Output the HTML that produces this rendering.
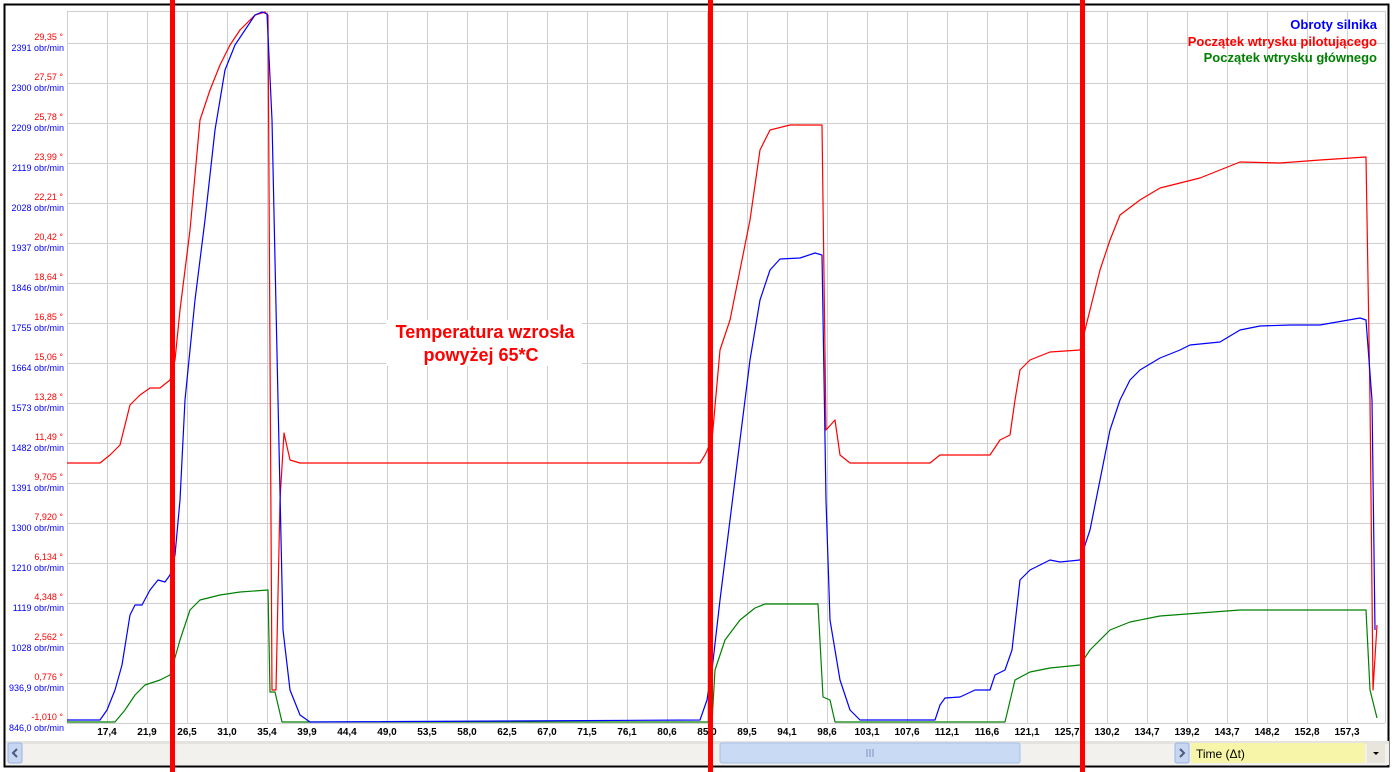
<!DOCTYPE html>
<html><head><meta charset="utf-8"><style>
html,body{margin:0;padding:0;background:#fff;width:1395px;height:772px;overflow:hidden}
svg{display:block}
.yr{fill:#f00;font:9px "Liberation Sans",sans-serif;text-anchor:end}
.yb{fill:#00f;font:9px "Liberation Sans",sans-serif;text-anchor:end}
.xl{fill:#000;font:bold 10px "Liberation Sans",sans-serif;text-anchor:middle}
</style></head><body>
<svg width="1395" height="772" viewBox="0 0 1395 772" xmlns="http://www.w3.org/2000/svg">
<defs>
<pattern id="g" patternUnits="userSpaceOnUse" x="67" y="43" width="40" height="40">
<path d="M0.5 0V40M0 0.5H40" stroke="#cfcfcf" stroke-width="1" fill="none"/>
</pattern>
</defs>
<rect x="4.5" y="4.5" width="1384" height="762" fill="#fff" stroke="#000" stroke-width="2"/>
<rect x="67" y="11" width="1318" height="712" fill="url(#g)"/>
<path d="M67 11.5H1385M1385.5 11V723M67 723.5H1385" stroke="#cfcfcf" fill="none"/>
<g>
<text class="yr" x="63" y="40">29,35 °</text><text class="yb" x="64" y="51">2391 obr/min</text>
<text class="yr" x="63" y="80">27,57 °</text><text class="yb" x="64" y="91">2300 obr/min</text>
<text class="yr" x="63" y="120">25,78 °</text><text class="yb" x="64" y="131">2209 obr/min</text>
<text class="yr" x="63" y="160">23,99 °</text><text class="yb" x="64" y="171">2119 obr/min</text>
<text class="yr" x="63" y="200">22,21 °</text><text class="yb" x="64" y="211">2028 obr/min</text>
<text class="yr" x="63" y="240">20,42 °</text><text class="yb" x="64" y="251">1937 obr/min</text>
<text class="yr" x="63" y="280">18,64 °</text><text class="yb" x="64" y="291">1846 obr/min</text>
<text class="yr" x="63" y="320">16,85 °</text><text class="yb" x="64" y="331">1755 obr/min</text>
<text class="yr" x="63" y="360">15,06 °</text><text class="yb" x="64" y="371">1664 obr/min</text>
<text class="yr" x="63" y="400">13,28 °</text><text class="yb" x="64" y="411">1573 obr/min</text>
<text class="yr" x="63" y="440">11,49 °</text><text class="yb" x="64" y="451">1482 obr/min</text>
<text class="yr" x="63" y="480">9,705 °</text><text class="yb" x="64" y="491">1391 obr/min</text>
<text class="yr" x="63" y="520">7,920 °</text><text class="yb" x="64" y="531">1300 obr/min</text>
<text class="yr" x="63" y="560">6,134 °</text><text class="yb" x="64" y="571">1210 obr/min</text>
<text class="yr" x="63" y="600">4,348 °</text><text class="yb" x="64" y="611">1119 obr/min</text>
<text class="yr" x="63" y="640">2,562 °</text><text class="yb" x="64" y="651">1028 obr/min</text>
<text class="yr" x="63" y="680">0,776 °</text><text class="yb" x="64" y="691">936,9 obr/min</text>
<text class="yr" x="63" y="720">-1,010 °</text><text class="yb" x="64" y="731">846,0 obr/min</text>
</g>
<g>
<text class="xl" x="107" y="735">17,4</text><text class="xl" x="147" y="735">21,9</text><text class="xl" x="187" y="735">26,5</text><text class="xl" x="227" y="735">31,0</text>
<text class="xl" x="267" y="735">35,4</text><text class="xl" x="307" y="735">39,9</text><text class="xl" x="347" y="735">44,4</text><text class="xl" x="387" y="735">49,0</text>
<text class="xl" x="427" y="735">53,5</text><text class="xl" x="467" y="735">58,0</text><text class="xl" x="507" y="735">62,5</text><text class="xl" x="547" y="735">67,0</text>
<text class="xl" x="587" y="735">71,5</text><text class="xl" x="627" y="735">76,1</text><text class="xl" x="667" y="735">80,6</text><text class="xl" x="707" y="735">85,0</text>
<text class="xl" x="747" y="735">89,5</text><text class="xl" x="787" y="735">94,1</text><text class="xl" x="827" y="735">98,6</text><text class="xl" x="867" y="735">103,1</text>
<text class="xl" x="907" y="735">107,6</text><text class="xl" x="947" y="735">112,1</text><text class="xl" x="987" y="735">116,6</text><text class="xl" x="1027" y="735">121,1</text>
<text class="xl" x="1067" y="735">125,7</text><text class="xl" x="1107" y="735">130,2</text><text class="xl" x="1147" y="735">134,7</text><text class="xl" x="1187" y="735">139,2</text>
<text class="xl" x="1227" y="735">143,7</text><text class="xl" x="1267" y="735">148,2</text><text class="xl" x="1307" y="735">152,8</text><text class="xl" x="1347" y="735">157,3</text>
</g>
<!-- scrollbar -->
<rect x="6" y="741" width="1383" height="24" fill="#f2f1ee"/>
<rect x="6" y="741" width="1383" height="3" fill="#e4e3df"/>
<rect x="8" y="743" width="14" height="20" rx="2" fill="#c7d7f2" stroke="#99b3e0"/>
<path d="M17 749l-4 4 4 4" stroke="#4a5a80" stroke-width="2" fill="none"/>
<rect x="720" y="743" width="300" height="20" rx="2" fill="#c9daf5" stroke="#a6bfe8"/>
<path d="M867 749v8M870 749v8M873 749v8" stroke="#7a93c0"/>
<rect x="1175" y="743" width="14" height="20" rx="2" fill="#c7d7f2" stroke="#99b3e0"/>
<path d="M1180 749l4 4-4 4" stroke="#4a5a80" stroke-width="2" fill="none"/>
<rect x="1191" y="743" width="174" height="20" fill="#f7f6a8"/>
<text x="1196" y="758" style="font:12px 'Liberation Sans',sans-serif" fill="#000">Time (Δt)</text>
<rect x="1367" y="743" width="18" height="20" fill="#e8e6dc"/>
<path d="M1373 752h6l-3 3z" fill="#000"/>
<!-- curves -->
<g fill="none" stroke-width="1.2" stroke-linejoin="round">
<polyline stroke="#008000" points="67,722 115,722 125,710 135,695 145,685 160,680 170,675 180,640 190,610 200,600 220,595 240,592 268,590 270,692 275,692 282,722 712,722 715,670 725,640 740,620 755,608 765,604 818,604 823,697 830,700 835,722 1005,722 1015,680 1030,672 1050,668 1080,665 1090,650 1110,630 1130,622 1160,616 1200,613 1240,610 1300,610 1366,610 1370,690 1377,718"/>
<polyline stroke="#ff0000" points="67,463 100,463 110,455 120,445 130,405 140,395 150,388 160,388 170,380 175,360 180,310 190,230 200,120 210,90 220,65 230,45 240,30 255,15 265,12 268,15 272,690 276,690 280,500 284,433 290,460 300,463 700,463 705,455 712,440 720,350 730,320 740,270 750,220 760,150 770,130 790,125 810,125 822,125 826,430 835,420 840,455 850,463 930,463 940,455 990,455 1000,440 1010,435 1015,400 1020,370 1030,360 1050,352 1080,350 1090,310 1100,270 1110,240 1120,215 1140,200 1160,188 1180,183 1200,178 1220,170 1240,162 1280,163 1320,160 1366,157 1370,400 1373,690 1377,625"/>
<polyline stroke="#0000ff" points="67,720 100,720 107,710 115,690 122,665 130,615 135,605 142,605 150,590 158,580 165,582 170,575 175,555 180,500 185,400 195,300 205,220 215,130 225,70 235,45 245,30 255,15 262,12 267,14 272,120 278,400 283,630 290,690 300,715 310,722 700,720 707,700 712,670 720,600 730,520 740,440 750,360 760,300 770,270 780,259 800,258 815,253 822,255 826,500 830,620 840,680 850,710 860,720 935,720 940,705 945,698 960,697 975,690 990,690 995,675 1005,670 1012,650 1020,580 1030,570 1050,560 1060,562 1080,560 1090,530 1100,480 1110,430 1120,400 1130,380 1140,370 1160,358 1180,350 1190,345 1220,342 1240,330 1260,326 1290,325 1320,325 1360,318 1366,320 1372,400 1375,630"/>
</g>
<!-- legend -->
<g style="font:bold 13px 'Liberation Sans',sans-serif" text-anchor="end">
<text x="1377" y="29" fill="#0000ff">Obroty silnika</text>
<text x="1377" y="46" fill="#ff0000">Początek wtrysku pilotującego</text>
<text x="1377" y="62" fill="#008000">Początek wtrysku głównego</text>
</g>
<!-- annotation -->
<rect x="386" y="320" width="196" height="46" fill="#fff"/>
<g style="font:bold 18px 'Liberation Sans',sans-serif" text-anchor="middle" fill="#ff0000">
<text x="485" y="338">Temperatura wzrosła</text>
<text x="481" y="361">powyżej 65*C</text>
</g>
<!-- red markers -->
<rect x="170" y="0" width="5" height="772" fill="#ff0000"/>
<rect x="708" y="0" width="5" height="772" fill="#ff0000"/>
<rect x="1080" y="0" width="5" height="772" fill="#ff0000"/>
</svg>
</body></html>
